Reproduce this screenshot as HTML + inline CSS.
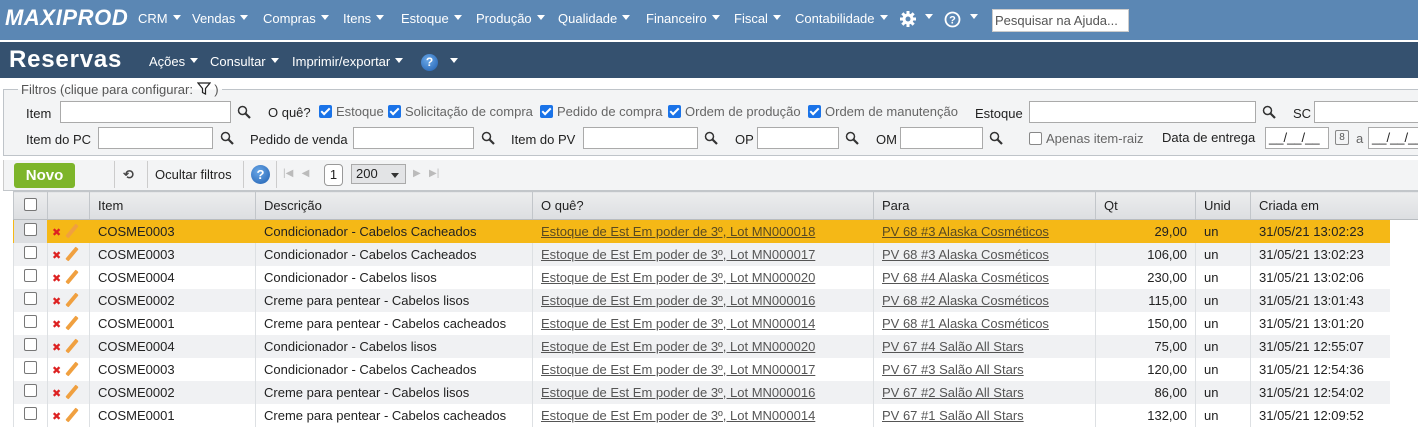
<!DOCTYPE html>
<html><head><meta charset="utf-8">
<style>
*{box-sizing:border-box;margin:0;padding:0}
body{width:1418px;height:434px;overflow:hidden;background:#fff;font-family:"Liberation Sans","DejaVu Sans",sans-serif;font-size:13px;color:#222;position:relative}
.a{position:absolute;white-space:nowrap}
#top{position:absolute;left:0;top:0;width:1418px;height:40px;background:#5b87b4}
#top .m{color:#fff;font-size:13px;top:11px}
.tri{display:inline-block;width:0;height:0;border-left:4px solid transparent;border-right:4px solid transparent;border-top:5px solid #fff;vertical-align:middle;margin-left:5px;position:relative;top:-2px}
.tri.a{position:absolute;margin:0}
#bar2{position:absolute;left:0;top:42px;width:1418px;height:36px;background:#35516f}
#filt{position:absolute;left:3px;top:89px;width:1420px;height:67px;border:1px solid #bfc4c9;background:#f3f4f5}
.inp{position:absolute;height:22px;background:#fff;border:1px solid #aaa}
.lbl{position:absolute;font-size:13px;color:#222;white-space:nowrap}
.cb{display:inline-block;width:13px;height:13px;background:#1a73e8;border-radius:2px;vertical-align:-2px;position:relative;margin-right:4px}
.cb:after{content:"";position:absolute;left:4px;top:1px;width:3px;height:7px;border:solid #fff;border-width:0 2px 2px 0;transform:rotate(45deg)}
.g{color:#666}
#tool{position:absolute;left:3px;top:160px;width:1420px;height:30px;background:#f3f4f5;border-left:1px solid #ccc}
table{position:absolute;left:13px;top:191px;border-collapse:collapse;font-size:13px;table-layout:fixed;width:1405px}
th{height:28px;background:linear-gradient(#ecedee,#dcdee1);font-weight:normal;text-align:left;padding-left:8px;border-left:1px solid #c2c6ca;border-top:1px solid #c2c6ca;border-bottom:1px solid #b8bcc0;color:#222}
td{height:23px;padding-left:8px;border-left:1px solid #dde0e3;white-space:nowrap;overflow:hidden}
tr.o td{background:#f5b816;border-left-color:#f5b816}
tr.e td{background:#f0f1f3}
tr.w td{background:#fff}
tr td.z{background:#fff !important;border-left:none}
td a{color:#555;text-decoration:underline}
tr.o td a{color:#5a4a20}
td.r{text-align:right;padding-right:8px}
.ck{display:inline-block;width:13px;height:13px;border:1px solid #777;border-radius:2px;background:#fff}
.x{color:#d22;font-weight:bold;font-size:11px}
.pen{display:inline-block;width:4px;height:16px;background:#f0a040;transform:rotate(40deg);margin-left:9px;vertical-align:-3px;border-radius:1px}
.mag{position:absolute;width:14px;height:14px}
</style></head><body>
<div id="top">
<div class="a" style="left:5px;top:5px;color:#fff;font-weight:bold;font-style:italic;font-size:22px;letter-spacing:0.6px">MAXIPROD</div>
<div class="a m" style="left:138px">CRM<span class="tri"></span></div>
<div class="a m" style="left:192px">Vendas<span class="tri"></span></div>
<div class="a m" style="left:263px">Compras<span class="tri"></span></div>
<div class="a m" style="left:343px">Itens<span class="tri"></span></div>
<div class="a m" style="left:401px">Estoque<span class="tri"></span></div>
<div class="a m" style="left:476px">Produção<span class="tri"></span></div>
<div class="a m" style="left:558px">Qualidade<span class="tri"></span></div>
<div class="a m" style="left:646px">Financeiro<span class="tri"></span></div>
<div class="a m" style="left:734px">Fiscal<span class="tri"></span></div>
<div class="a m" style="left:795px">Contabilidade<span class="tri"></span></div>
<svg class="a" style="left:899px;top:10px" width="18" height="18" viewBox="0 0 18 18"><g fill="#fff"><circle cx="9" cy="9" r="5.5"/><rect x="7.5" y="1" width="3" height="16"/><rect x="1" y="7.5" width="16" height="3"/><rect x="7.5" y="1" width="3" height="16" transform="rotate(45 9 9)"/><rect x="7.5" y="1" width="3" height="16" transform="rotate(-45 9 9)"/></g><circle cx="9" cy="9" r="2.5" fill="#5b87b4"/></svg>
<span class="tri a" style="left:925px;top:14px"></span>
<svg class="a" style="left:944px;top:11px" width="17" height="17" viewBox="0 0 17 17"><circle cx="8.5" cy="8.5" r="7" fill="none" stroke="#fff" stroke-width="1.8"/><text x="8.5" y="12.5" text-anchor="middle" font-size="11" font-weight="bold" fill="#fff" font-family="Liberation Sans">?</text></svg>
<span class="tri a" style="left:970px;top:14px"></span>
<div class="a" style="left:992px;top:9px;width:137px;height:23px;background:#fff;border:1px solid #ccc;color:#555;font-size:13px;padding:3px 2px">Pesquisar na Ajuda...</div>
</div>
<div id="bar2">
<div class="a" style="left:9px;top:4px;color:#fff;font-weight:bold;font-size:24px;letter-spacing:0.8px">Reservas</div>
<div class="a" style="left:149px;top:12px;color:#fff">Ações<span class="tri"></span></div>
<div class="a" style="left:210px;top:12px;color:#fff">Consultar<span class="tri"></span></div>
<div class="a" style="left:292px;top:12px;color:#fff">Imprimir/exportar<span class="tri"></span></div>
<div class="a" style="left:421px;top:12px;width:17px;height:17px;border-radius:50%;background:radial-gradient(circle at 40% 35%,#6aa8e8,#1f5fb0);color:#fff;font-weight:bold;font-size:12px;text-align:center;line-height:17px">?</div>
<span class="tri a" style="left:450px;top:16px"></span>
</div>
<div id="filt"></div>
<div class="a" style="left:18px;top:82px;padding:0 3px;color:#555;font-size:13px;background:linear-gradient(#fff 50%,#f3f4f5 50%)">Filtros (clique para configurar: <svg width="14" height="13" viewBox="0 0 14 13" style="vertical-align:-1px"><path d="M1 1h12L8.5 6.5V12L5.5 10.5V6.5Z" fill="none" stroke="#222" stroke-width="1.2"/></svg> )</div>

<div class="lbl" style="left:26px;top:106px">Item</div>
<div class="inp" style="left:60px;top:101px;width:171px"></div>
<div class="lbl" style="left:268px;top:105px">O quê?</div>
<div class="lbl g" style="left:319px;top:104px"><span class="cb"></span>Estoque</div>
<div class="lbl g" style="left:388px;top:104px"><span class="cb"></span>Solicitação de compra</div>
<div class="lbl g" style="left:540px;top:104px"><span class="cb"></span>Pedido de compra</div>
<div class="lbl g" style="left:668px;top:104px"><span class="cb"></span>Ordem de produção</div>
<div class="lbl g" style="left:808px;top:104px"><span class="cb"></span>Ordem de manutenção</div>
<div class="lbl" style="left:975px;top:106px">Estoque</div>
<div class="inp" style="left:1029px;top:101px;width:227px"></div>
<div class="lbl" style="left:1293px;top:106px">SC</div>
<div class="inp" style="left:1314px;top:101px;width:110px"></div>

<div class="lbl" style="left:26px;top:132px">Item do PC</div>
<div class="inp" style="left:98px;top:127px;width:115px"></div>
<div class="lbl" style="left:250px;top:132px">Pedido de venda</div>
<div class="inp" style="left:353px;top:127px;width:121px"></div>
<div class="lbl" style="left:511px;top:132px">Item do PV</div>
<div class="inp" style="left:583px;top:127px;width:115px"></div>
<div class="lbl" style="left:735px;top:132px">OP</div>
<div class="inp" style="left:757px;top:127px;width:82px"></div>
<div class="lbl" style="left:876px;top:132px">OM</div>
<div class="inp" style="left:900px;top:127px;width:83px"></div>
<div class="lbl g" style="left:1029px;top:131px"><span class="ck" style="border-color:#888;vertical-align:-2px;margin-right:4px"></span>Apenas item-raiz</div>
<div class="lbl" style="left:1162px;top:130px">Data de entrega</div>
<div class="inp" style="left:1265px;top:127px;width:64px;padding:2px 3px;font-size:13px">__/__/__</div>
<div class="a" style="left:1335px;top:130px;width:14px;height:15px;border:1px solid #888;border-radius:2px;font-size:10px;text-align:center;line-height:13px;color:#555">8</div>
<div class="lbl g" style="left:1356px;top:131px">a</div>
<div class="inp" style="left:1368px;top:127px;width:64px;padding:2px 3px;font-size:13px">__/__/__</div>

<svg class="mag" style="left:237px;top:105px" viewBox="0 0 14 14"><circle cx="5.5" cy="5.5" r="4" fill="none" stroke="#333" stroke-width="1.5"/><path d="M8.5 8.5L13 13" stroke="#333" stroke-width="2.2"/></svg>
<svg class="mag" style="left:220px;top:131px" viewBox="0 0 14 14"><circle cx="5.5" cy="5.5" r="4" fill="none" stroke="#333" stroke-width="1.5"/><path d="M8.5 8.5L13 13" stroke="#333" stroke-width="2.2"/></svg>
<svg class="mag" style="left:481px;top:131px" viewBox="0 0 14 14"><circle cx="5.5" cy="5.5" r="4" fill="none" stroke="#333" stroke-width="1.5"/><path d="M8.5 8.5L13 13" stroke="#333" stroke-width="2.2"/></svg>
<svg class="mag" style="left:704px;top:131px" viewBox="0 0 14 14"><circle cx="5.5" cy="5.5" r="4" fill="none" stroke="#333" stroke-width="1.5"/><path d="M8.5 8.5L13 13" stroke="#333" stroke-width="2.2"/></svg>
<svg class="mag" style="left:845px;top:131px" viewBox="0 0 14 14"><circle cx="5.5" cy="5.5" r="4" fill="none" stroke="#333" stroke-width="1.5"/><path d="M8.5 8.5L13 13" stroke="#333" stroke-width="2.2"/></svg>
<svg class="mag" style="left:989px;top:131px" viewBox="0 0 14 14"><circle cx="5.5" cy="5.5" r="4" fill="none" stroke="#333" stroke-width="1.5"/><path d="M8.5 8.5L13 13" stroke="#333" stroke-width="2.2"/></svg>
<svg class="mag" style="left:1262px;top:105px" viewBox="0 0 14 14"><circle cx="5.5" cy="5.5" r="4" fill="none" stroke="#333" stroke-width="1.5"/><path d="M8.5 8.5L13 13" stroke="#333" stroke-width="2.2"/></svg>

<div id="tool"></div>
<div class="a" style="left:14px;top:163px;width:61px;height:25px;background:#7db52a;border-radius:3px;color:#fff;font-weight:bold;font-size:15px;text-align:center;line-height:25px">Novo</div>
<div class="a" style="left:114px;top:161px;width:1px;height:27px;background:#ccc"></div>
<div class="a" style="left:123px;top:167px;font-size:13px;font-weight:bold;color:#444">⟲</div>
<div class="a" style="left:147px;top:161px;width:1px;height:27px;background:#ccc"></div>
<div class="a" style="left:155px;top:167px">Ocultar filtros</div>
<div class="a" style="left:243px;top:161px;width:1px;height:27px;background:#ccc"></div>
<div class="a" style="left:251px;top:165px;width:19px;height:19px;border-radius:50%;background:radial-gradient(circle at 40% 35%,#6aa8e8,#1f5fb0);color:#fff;font-weight:bold;font-size:13px;text-align:center;line-height:19px">?</div>
<div class="a" style="left:276px;top:161px;width:1px;height:27px;background:#ccc"></div>
<div class="a" style="left:283px;top:168px;color:#bbb;font-size:10px">|◀ &nbsp; ◀</div>
<div class="a" style="left:324px;top:164px;width:19px;height:22px;border:1px solid #999;border-radius:4px;background:#fff;text-align:center;line-height:20px">1</div>
<div class="a" style="left:351px;top:164px;width:55px;height:20px;border:1px solid #aaa;background:#e3e4e6;padding-left:4px;line-height:18px">200<span style="position:absolute;right:6px;top:8px;border-left:4px solid transparent;border-right:4px solid transparent;border-top:5px solid #333"></span></div>
<div class="a" style="left:413px;top:168px;color:#bbb;font-size:10px">▶ &nbsp; ▶|</div>
<div class="a" style="left:3px;top:190px;width:1420px;height:1px;background:#c2c6ca"></div>

<table>
<colgroup><col style="width:34px"><col style="width:42px"><col style="width:166px"><col style="width:277px"><col style="width:341px"><col style="width:222px"><col style="width:100px"><col style="width:55px"><col style="width:139px"><col style="width:29px"></colgroup>
<tr><th style="padding:0;text-align:center"><span class="ck"></span></th><th></th><th>Item</th><th>Descrição</th><th>O quê?</th><th>Para</th><th>Qt</th><th>Unid</th><th>Criada em</th><th style="border-left:none"></th></tr>
<tr class="o"><td style="padding:0;text-align:center;background:#dcdee1"><span class="ck"></span></td><td style="padding-left:4px"><span class="x">✖</span><span class="pen"></span></td><td>COSME0003</td><td>Condicionador - Cabelos Cacheados</td><td><a>Estoque de Est Em poder de 3º, Lot MN000018</a></td><td><a>PV 68 #3 Alaska Cosméticos</a></td><td class="r">29,00</td><td>un</td><td>31/05/21 13:02:23</td><td class="z"></td></tr>
<tr class="e"><td style="padding:0;text-align:center"><span class="ck"></span></td><td style="padding-left:4px"><span class="x">✖</span><span class="pen"></span></td><td>COSME0003</td><td>Condicionador - Cabelos Cacheados</td><td><a>Estoque de Est Em poder de 3º, Lot MN000017</a></td><td><a>PV 68 #3 Alaska Cosméticos</a></td><td class="r">106,00</td><td>un</td><td>31/05/21 13:02:23</td><td class="z"></td></tr>
<tr class="w"><td style="padding:0;text-align:center"><span class="ck"></span></td><td style="padding-left:4px"><span class="x">✖</span><span class="pen"></span></td><td>COSME0004</td><td>Condicionador - Cabelos lisos</td><td><a>Estoque de Est Em poder de 3º, Lot MN000020</a></td><td><a>PV 68 #4 Alaska Cosméticos</a></td><td class="r">230,00</td><td>un</td><td>31/05/21 13:02:06</td><td class="z"></td></tr>
<tr class="e"><td style="padding:0;text-align:center"><span class="ck"></span></td><td style="padding-left:4px"><span class="x">✖</span><span class="pen"></span></td><td>COSME0002</td><td>Creme para pentear - Cabelos lisos</td><td><a>Estoque de Est Em poder de 3º, Lot MN000016</a></td><td><a>PV 68 #2 Alaska Cosméticos</a></td><td class="r">115,00</td><td>un</td><td>31/05/21 13:01:43</td><td class="z"></td></tr>
<tr class="w"><td style="padding:0;text-align:center"><span class="ck"></span></td><td style="padding-left:4px"><span class="x">✖</span><span class="pen"></span></td><td>COSME0001</td><td>Creme para pentear - Cabelos cacheados</td><td><a>Estoque de Est Em poder de 3º, Lot MN000014</a></td><td><a>PV 68 #1 Alaska Cosméticos</a></td><td class="r">150,00</td><td>un</td><td>31/05/21 13:01:20</td><td class="z"></td></tr>
<tr class="e"><td style="padding:0;text-align:center"><span class="ck"></span></td><td style="padding-left:4px"><span class="x">✖</span><span class="pen"></span></td><td>COSME0004</td><td>Condicionador - Cabelos lisos</td><td><a>Estoque de Est Em poder de 3º, Lot MN000020</a></td><td><a>PV 67 #4 Salão All Stars</a></td><td class="r">75,00</td><td>un</td><td>31/05/21 12:55:07</td><td class="z"></td></tr>
<tr class="w"><td style="padding:0;text-align:center"><span class="ck"></span></td><td style="padding-left:4px"><span class="x">✖</span><span class="pen"></span></td><td>COSME0003</td><td>Condicionador - Cabelos Cacheados</td><td><a>Estoque de Est Em poder de 3º, Lot MN000017</a></td><td><a>PV 67 #3 Salão All Stars</a></td><td class="r">120,00</td><td>un</td><td>31/05/21 12:54:36</td><td class="z"></td></tr>
<tr class="e"><td style="padding:0;text-align:center"><span class="ck"></span></td><td style="padding-left:4px"><span class="x">✖</span><span class="pen"></span></td><td>COSME0002</td><td>Creme para pentear - Cabelos lisos</td><td><a>Estoque de Est Em poder de 3º, Lot MN000016</a></td><td><a>PV 67 #2 Salão All Stars</a></td><td class="r">86,00</td><td>un</td><td>31/05/21 12:54:02</td><td class="z"></td></tr>
<tr class="w"><td style="padding:0;text-align:center"><span class="ck"></span></td><td style="padding-left:4px"><span class="x">✖</span><span class="pen"></span></td><td>COSME0001</td><td>Creme para pentear - Cabelos cacheados</td><td><a>Estoque de Est Em poder de 3º, Lot MN000014</a></td><td><a>PV 67 #1 Salão All Stars</a></td><td class="r">132,00</td><td>un</td><td>31/05/21 12:09:52</td><td class="z"></td></tr>
</table>
</body></html>
